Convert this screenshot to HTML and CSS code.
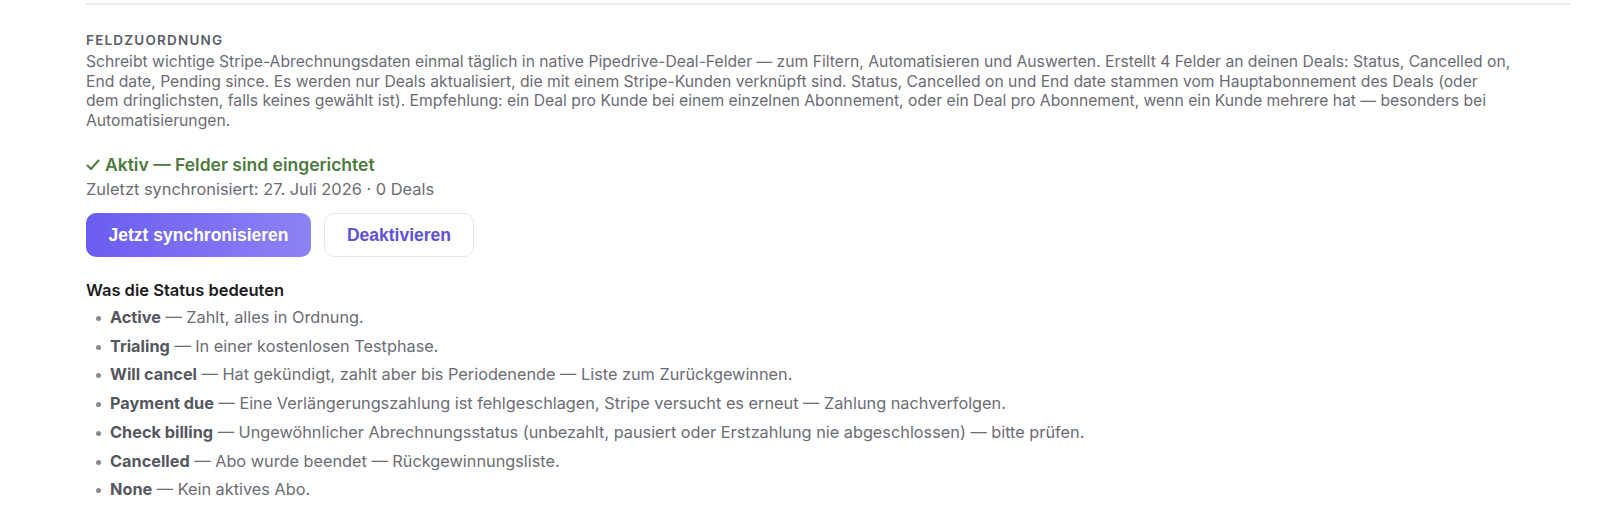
FILE: index.html
```html
<!DOCTYPE html>
<html lang="de">
<head>
    <meta charset="UTF-8">
    <meta name="viewport" content="width=device-width, initial-scale=1.0">
    <title>Feldzuordnung</title>
    <link rel="stylesheet" href="styles.css">
</head>
<body>

    <section class="settings-section">
        <h3 class="section-title">Feldzuordnung</h3>
        <p class="section-desc">
            Schreibt wichtige Stripe-Abrechnungsdaten einmal täglich in native Pipedrive-Deal-Felder — zum Filtern, Automatisieren und Auswerten. Erstellt 4 Felder an deinen Deals: Status, Cancelled on, End date, Pending since. Es werden nur Deals aktualisiert, die mit einem Stripe-Kunden verknüpft sind. Status, Cancelled on und End date stammen vom Hauptabonnement des Deals (oder dem dringlichsten, falls keines gewählt ist). Empfehlung: ein Deal pro Kunde bei einem einzelnen Abonnement, oder ein Deal pro Abonnement, wenn ein Kunde mehrere hat — besonders bei Automatisierungen.
        </p>

        <div class="status-ok">
            <svg class="check" width="14" height="14" viewBox="0 0 14 14"><polyline points="1.5,7.5 5,11 12.5,2.5" fill="none" stroke="currentColor" stroke-width="2" stroke-linecap="round" stroke-linejoin="round"/></svg>
            Aktiv — Felder sind eingerichtet
        </div>
        <div class="status-meta">Zuletzt synchronisiert: 27. Juli 2026 · 0 Deals</div>

        <div class="actions">
            <button type="button" class="btn btn-primary" onclick="syncNow()">Jetzt synchronisieren</button>
            <button type="button" class="btn btn-secondary">Deaktivieren</button>
        </div>

        <h4 class="legend-title">Was die Status bedeuten</h4>
        <ul class="legend">
            <li><b>Active</b> — Zahlt, alles in Ordnung.</li>
            <li><b>Trialing</b> — In einer kostenlosen Testphase.</li>
            <li><b>Will cancel</b> — Hat gekündigt, zahlt aber bis Periodenende — Liste zum Zurückgewinnen.</li>
            <li><b>Payment due</b> — Eine Verlängerungszahlung ist fehlgeschlagen, Stripe versucht es erneut — Zahlung nachverfolgen.</li>
            <li><b>Check billing</b> — Ungewöhnlicher Abrechnungsstatus (unbezahlt, pausiert oder Erstzahlung nie abgeschlossen) — bitte prüfen.</li>
            <li><b>Cancelled</b> — Abo wurde beendet — Rückgewinnungsliste.</li>
            <li><b>None</b> — Kein aktives Abo.</li>
        </ul>
    </section>

    <script>
        // Placeholder for the manual sync
        function syncNow() {
            console.log("Sync gestartet");
        }
    </script>

</body>
</html>
```

FILE: styles.css
```css
body {
    font-family: Inter, "Noto Sans", Arial, sans-serif;
    margin: 0;
    background-color: #fff;
    color: #6c6c75;
}

.settings-section {
    margin: 3px 30px 0 86px;
    border-top: 2px solid #ebebeb;
    padding-top: 25px;
}

.section-title {
    margin: 0 0 2px;
    font-size: 13.5px;
    line-height: 20px;
    font-weight: 600;
    letter-spacing: 1.2px;
    text-transform: uppercase;
    color: #5b5e68;
}

.section-desc {
    max-width: 1426px;
    margin: 0 0 22px;
    font-size: 15.7px;
    line-height: 19.5px;
}

.status-ok {
    display: flex;
    align-items: center;
    gap: 5px;
    font-size: 17.5px;
    font-weight: 600;
    color: #4d7a3e;
    line-height: 25px;
}

.status-meta {
    font-size: 16.4px;
    line-height: 25px;
    margin-bottom: 11px;
}

.actions {
    display: flex;
    gap: 13px;
    margin-bottom: 22px;
}

.btn {
    font-family: "Liberation Sans", Arial, sans-serif;
    font-size: 17.5px;
    font-weight: 700;
    height: 44px;
    border-radius: 10px;
    cursor: pointer;
}

.btn-primary {
    width: 225px;
    border: none;
    color: #fff;
    background: linear-gradient(90deg, #6a5df0, #8c83f5);
}

.btn-secondary {
    width: 150px;
    background-color: #fff;
    border: 1px solid #e6e6ee;
    color: #5e50d8;
}

.legend-title {
    margin: 0 0 2px;
    font-size: 16.5px;
    line-height: 22px;
    font-weight: 600;
    color: #1c1c1e;
}

.legend {
    margin: 0;
    padding-left: 10px;
    list-style: none;
    font-size: 16.3px;
    line-height: 28.7px;
}

.legend li::before {
    content: "";
    display: inline-block;
    width: 5px;
    height: 5px;
    margin-right: 9px;
    border-radius: 50%;
    background-color: #8a8a92;
    vertical-align: middle;
}

.legend b {
    color: #55575f;
}
```
